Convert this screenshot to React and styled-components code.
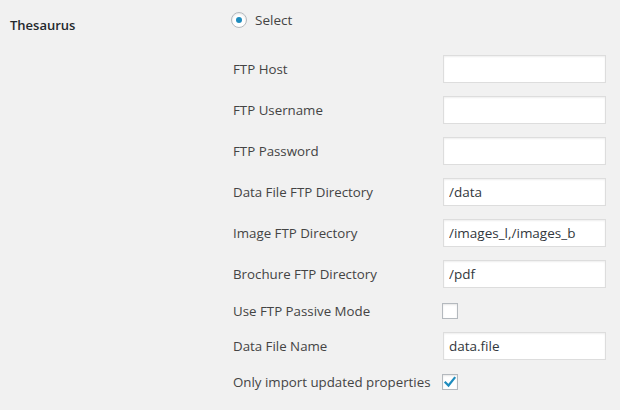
import React from "react";
import styled, { createGlobalStyle } from "styled-components";

const Global = createGlobalStyle`
  html, body { margin: 0; padding: 0; background: #f1f1f1; }
  body { font-family: "Open Sans", "Noto Sans", sans-serif; font-size: 13px; color: #444; }
  * { box-sizing: border-box; }
`;

const Page = styled.div`
  display: flex;
  width: 620px;
  height: 410px;
  padding-left: 10px;
  background: #f1f1f1;
`;

const Th = styled.div`
  width: 210px;
  flex: none;
  padding-top: 16px;
  font-weight: 600;
  font-size: 13px;
  color: #23282d;
  line-height: 18px;
`;

const Td = styled.div`
  flex: 1;
  display: flex;
  flex-direction: column;
  padding-left: 11px;
`;

const RadioRow = styled.label`
  display: flex;
  align-items: center;
  gap: 8px;
  height: 40px;
  color: #444;
  font-size: 13.5px;
`;

const Radio = styled.span`
  width: 16px;
  height: 16px;
  border-radius: 50%;
  border: 1px solid #b4b9be;
  background: #fff;
  box-shadow: inset 0 1px 2px rgba(0,0,0,0.1);
  display: flex;
  align-items: center;
  justify-content: center;
  &::after {
    content: "";
    width: 6px;
    height: 6px;
    border-radius: 50%;
    background: #1e8cbe;
  }
`;

const Nested = styled.div`
  display: flex;
  flex-direction: column;
  padding-top: 8px;
  padding-left: 2px;
`;

const Row = styled.div`
  display: flex;
  align-items: center;
  height: ${(p) => p.$h}px;
`;

const Label = styled.div`
  width: 210px;
  flex: none;
  color: #444;
  font-size: 13.3px;
`;

const Input = styled.input`
  width: 163px;
  height: 28px;
  border: 1px solid #ddd;
  background: #fff;
  box-shadow: inset 0 1px 2px rgba(0,0,0,0.07);
  padding: 0 5px;
  font-family: "Open Sans", "Noto Sans", sans-serif;
  font-size: 13.5px;
  color: #32373c;
  outline: none;
  margin: 0;
`;

const Check = styled.span`
  width: 16px;
  height: 16px;
  margin-left: -1px;
  border: 1px solid #b4b9be;
  background: #fff;
  box-shadow: inset 0 1px 2px rgba(0,0,0,0.1);
  display: flex;
  align-items: center;
  justify-content: center;
`;

const rows = [
  { label: "FTP Host", value: "" },
  { label: "FTP Username", value: "" },
  { label: "FTP Password", value: "" },
  { label: "Data File FTP Directory", value: "/data" },
  { label: "Image FTP Directory", value: "/images_l,/images_b" },
  { label: "Brochure FTP Directory", value: "/pdf" },
];

export default function App() {
  return (
    <Page>
      <Global />
      <Th>Thesaurus</Th>
      <Td>
        <RadioRow>
          <Radio />
          Select
        </RadioRow>
        <Nested>
          {rows.map((r) => (
            <Row $h={41} key={r.label}>
              <Label>{r.label}</Label>
              <Input defaultValue={r.value} />
            </Row>
          ))}
          <Row $h={34}>
            <Label>Use FTP Passive Mode</Label>
            <Check />
          </Row>
          <Row $h={35}>
            <Label>Data File Name</Label>
            <Input defaultValue="data.file" />
          </Row>
          <Row $h={38}>
            <Label>Only import updated properties</Label>
            <Check>
              <svg width="14" height="14" viewBox="0 0 14 14">
                <path d="M2.5 7.5 L5.5 10.5 L11.5 3" fill="none" stroke="#1e8cbe" strokeWidth="2.2" strokeLinecap="square" />
              </svg>
            </Check>
          </Row>
        </Nested>
      </Td>
    </Page>
  );
}
